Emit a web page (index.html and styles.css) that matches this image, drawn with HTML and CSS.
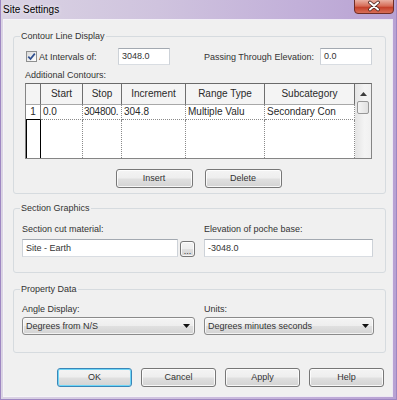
FILE: index.html
```html
<!DOCTYPE html>
<html>
<head>
<meta charset="utf-8">
<link rel="stylesheet" href="styles.css">
</head>
<body>
<div class="window">
  <div class="titlebar">
    <span class="title">Site Settings</span>
    <svg class="close" width="40" height="14" viewBox="0 0 40 14">
      <defs>
        <linearGradient id="cg" x1="0" y1="0" x2="0" y2="1">
          <stop offset="0" stop-color="#eab0a3"/>
          <stop offset="0.45" stop-color="#d66c57"/>
          <stop offset="0.55" stop-color="#c5412b"/>
          <stop offset="1" stop-color="#d9735c"/>
        </linearGradient>
      </defs>
      <path d="M0.5 0 V10 Q0.5 13.5 4 13.5 H36 Q39.5 13.5 39.5 10 V0" fill="url(#cg)" stroke="#6e2d26"/>
      <path d="M16 2.5 L24 9.5 M24 2.5 L16 9.5" stroke="#4a2420" stroke-width="3.6" stroke-linecap="round"/>
      <path d="M16 2.5 L24 9.5 M24 2.5 L16 9.5" stroke="#ffffff" stroke-width="2" stroke-linecap="round"/>
    </svg>
  </div>
  <div class="client">
    <fieldset class="group g1">
      <legend>Contour Line Display</legend>
      <div class="g1in">
        <div class="row1">
          <label class="chk">
            <span class="cbox">
              <svg width="9" height="9" viewBox="0 0 9 9"><path d="M1.3 4.6 L3.5 7 L7.8 1.6" fill="none" stroke="#2f4f8f" stroke-width="1.7"/></svg>
            </span>
            <span>At Intervals of:</span>
          </label>
          <span class="tb w52">3048.0</span>
          <span class="lbl2">Passing Through Elevation:</span>
          <span class="tb w52 push">0.0</span>
        </div>
        <div class="addl">Additional Contours:</div>
        <div class="dg">
          <div class="hc"></div>
          <div class="hc">Start</div>
          <div class="hc">Stop</div>
          <div class="hc">Increment</div>
          <div class="hc">Range Type</div>
          <div class="hc">Subcategory</div>
          <div class="sb">
            <svg class="up" width="7" height="4" viewBox="0 0 7 4"><polygon points="3.5,0 7,4 0,4" fill="#3c3c3c"/></svg>
            <div class="thumb"></div>
          </div>
          <div class="rh r1">1</div>
          <div class="dc">0.0</div>
          <div class="dc tight">304800.</div>
          <div class="dc">304.8</div>
          <div class="dc">Multiple Valu</div>
          <div class="dc">Secondary Con</div>
          <div class="rh r2"></div>
          <div class="dc e"></div>
          <div class="dc e"></div>
          <div class="dc e"></div>
          <div class="dc e"></div>
          <div class="dc e"></div>
        </div>
        <div class="btns1">
          <button class="btn wide">Insert</button>
          <button class="btn wide">Delete</button>
        </div>
      </div>
    </fieldset>

    <fieldset class="group g2">
      <legend>Section Graphics</legend>
      <div class="two">
        <div class="lbl">Section cut material:</div>
        <div class="lbl">Elevation of poche base:</div>
        <div class="matrow">
          <span class="tb mat">Site - Earth</span>
          <button class="btn dots">...</button>
        </div>
        <span class="tb elev">-3048.0</span>
      </div>
    </fieldset>

    <fieldset class="group g3">
      <legend>Property Data</legend>
      <div class="two three">
        <div class="lbl">Angle Display:</div>
        <div class="lbl">Units:</div>
        <div class="combo"><span>Degrees from N/S</span><svg width="7" height="4" viewBox="0 0 7 4"><polygon points="0,0 7,0 3.5,4" fill="#111"/></svg></div>
        <div class="combo"><span>Degrees minutes seconds</span><svg width="7" height="4" viewBox="0 0 7 4"><polygon points="0,0 7,0 3.5,4" fill="#111"/></svg></div>
      </div>
    </fieldset>

    <div class="btnrow">
      <button class="btn def">OK</button>
      <button class="btn">Cancel</button>
      <button class="btn">Apply</button>
      <button class="btn">Help</button>
    </div>
  </div>
</div>
</body>
</html>
```

FILE: styles.css
```css
* { box-sizing: border-box; }
html, body { margin: 0; padding: 0; }
body {
  width: 397px;
  height: 400px;
  overflow: hidden;
  font-family: "Liberation Sans", Arial, sans-serif;
  font-size: 9px;
  color: #333;
  background: #fff;
}
.window {
  width: 397px;
  height: 400px;
  display: flex;
  flex-direction: column;
  background: linear-gradient(90deg, #dad3e3 0%, #cfc3de 40%, #c2b0d9 75%, #b8a2d3 100%);
  border-left: 1px solid #9e87c2;
  border-right: 1px solid #9e87c2;
  border-bottom: 1px solid #9e87c2;
}
.titlebar {
  height: 20px;
  display: flex;
  align-items: flex-start;
  flex: none;
}
.title {
  font-size: 10px;
  line-height: 20px;
  padding-left: 2px;
  color: #000;
  text-shadow: 0 0 4px rgba(255,255,255,0.9);
}
.close {
  margin-left: auto;
  margin-right: 2px;
  display: block;
}
.client {
  flex: 1;
  margin: 0 4px 3px 3px;
  background: #f0f0f0;
  box-shadow: 0 0 0 1px rgba(255,255,255,0.75);
  padding: 11px 6px 0 9px;
  display: flex;
  flex-direction: column;
}
.group {
  margin: 0;
  min-width: 0;
  border: 1px solid #d6dbdf;
  border-radius: 3px;
  padding: 6px 0 5px 6px;
}
.group legend {
  padding: 0 1px;
  line-height: 11px;
  font-size: 9px;
}
.g2 { margin-top: 9px; padding: 10px 0 15px 6px; }
.g3 { margin-top: 11px; padding: 9px 0 17px 6px; }

.g1in { margin-left: 5px; width: 347px; }
.row1 {
  display: flex;
  align-items: center;
  height: 17px;
}
.chk {
  width: 93px;
  display: flex;
  align-items: center;
  gap: 2px;
  padding-left: 1px;
}
.cbox {
  width: 11px;
  height: 11px;
  border: 1px solid #8e8f8f;
  background: linear-gradient(135deg, #d9d9d9, #ffffff);
  display: flex;
  align-items: center;
  justify-content: center;
}
.cbox svg { display: block; }
.tb {
  display: block;
  height: 17px;
  border: 1px solid;
  border-color: #a3a9b1 #cdd2d8 #d9dde2 #cdd2d8;
  background: #fff;
  padding-left: 3px;
  line-height: 15px;
  font-size: 9px;
  white-space: nowrap;
}
.w52 { width: 52px; }
.lbl2 { margin-left: 34px; }
.push { margin-left: auto; }
.addl { margin-top: 5px; line-height: 11px; }

.dg {
  margin-top: 2px;
  width: 347px;
  display: grid;
  grid-template-columns: 15px 42px 39px 64px 79px 90px 16px;
  grid-template-rows: 21px 15px 38px;
  border: 1px solid #858585;
  border-top-color: #6a6a6a;
  background: #fff;
  font-size: 10px;
  color: #2a2a2a;
}
.hc {
  background: #f4f4f4;
  border-right: 1px solid #6e6e6e;
  border-bottom: 1px solid #a8a8a8;
  text-align: center;
  line-height: 20px;
  white-space: nowrap;
  overflow: hidden;
}
.sb {
  grid-column: 7;
  grid-row: 1 / span 3;
  background: linear-gradient(90deg, #e4e4e4, #f4f4f4 60%, #f0f0f0);
  display: flex;
  flex-direction: column;
  align-items: center;
}
.up { display: block; margin-top: 8px; }
.thumb {
  margin-top: 5px;
  width: 12px;
  height: 13px;
  border: 1px solid #979797;
  border-radius: 2px;
  background: linear-gradient(90deg, #f4f4f4, #e0e0e0);
}
.rh {
  text-align: center;
  line-height: 13px;
  background: #fff;
}
.r1 {
  border-right: 1px solid #7a7a7a;
  border-bottom: 1px solid #000;
}
.r2 {
  border-left: 1px solid #000;
  border-right: 1px solid #000;
}
.dc {
  border-right: 1px dotted #8a8a8a;
  border-bottom: 1px dotted #8a8a8a;
  padding-left: 2px;
  line-height: 14px;
  white-space: nowrap;
  overflow: hidden;
}
.dc.tight { letter-spacing: -0.25px; padding-left: 1px; }
.dc.e { border-bottom: none; }

.btns1 {
  margin-top: 10px;
  display: flex;
  justify-content: center;
  gap: 12px;
}
.btn {
  width: 75px;
  height: 19px;
  padding: 0;
  border: 1px solid #777;
  border-radius: 3px;
  background: linear-gradient(#f4f4f4 0%, #eeeeee 48%, #e0e0e0 52%, #d3d3d3 100%);
  box-shadow: inset 0 0 0 1px rgba(255,255,255,0.8);
  font-family: "Liberation Sans", Arial, sans-serif;
  font-size: 9px;
  color: #333;
  line-height: 17px;
}
.btn.wide { width: 77px; }
.btn.def {
  border-color: #3a86b8;
  box-shadow: inset 0 0 0 1px #6fd6f7;
}
.lbl { line-height: 11px; white-space: nowrap; }
.two {
  margin-left: 2px;
  display: grid;
  grid-template-columns: 173px 169px;
  column-gap: 9px;
  row-gap: 4px;
}
.two.three {
  grid-template-columns: 173px 170px;
  row-gap: 2px;
}
.matrow { display: flex; gap: 2px; }
.mat { width: 156px; height: 18px; line-height: 16px; }
.elev { width: 169px; height: 18px; line-height: 16px; }
.dots {
  width: 15px;
  height: 16px;
  margin-top: 2px;
  line-height: 18px;
  font-size: 9px;
}
.combo {
  height: 18px;
  border: 1px solid #8a8a8a;
  border-radius: 3px;
  background: linear-gradient(#f4f4f4 0%, #eeeeee 48%, #e0e0e0 52%, #d3d3d3 100%);
  box-shadow: inset 0 0 0 1px rgba(255,255,255,0.7);
  padding: 0 4px 0 3px;
  display: flex;
  align-items: center;
  justify-content: space-between;
  white-space: nowrap;
}
.combo svg { display: block; }
.btnrow {
  margin-top: 15px;
  display: flex;
  justify-content: flex-end;
  gap: 9px;
  padding-right: 2px;
}
```
